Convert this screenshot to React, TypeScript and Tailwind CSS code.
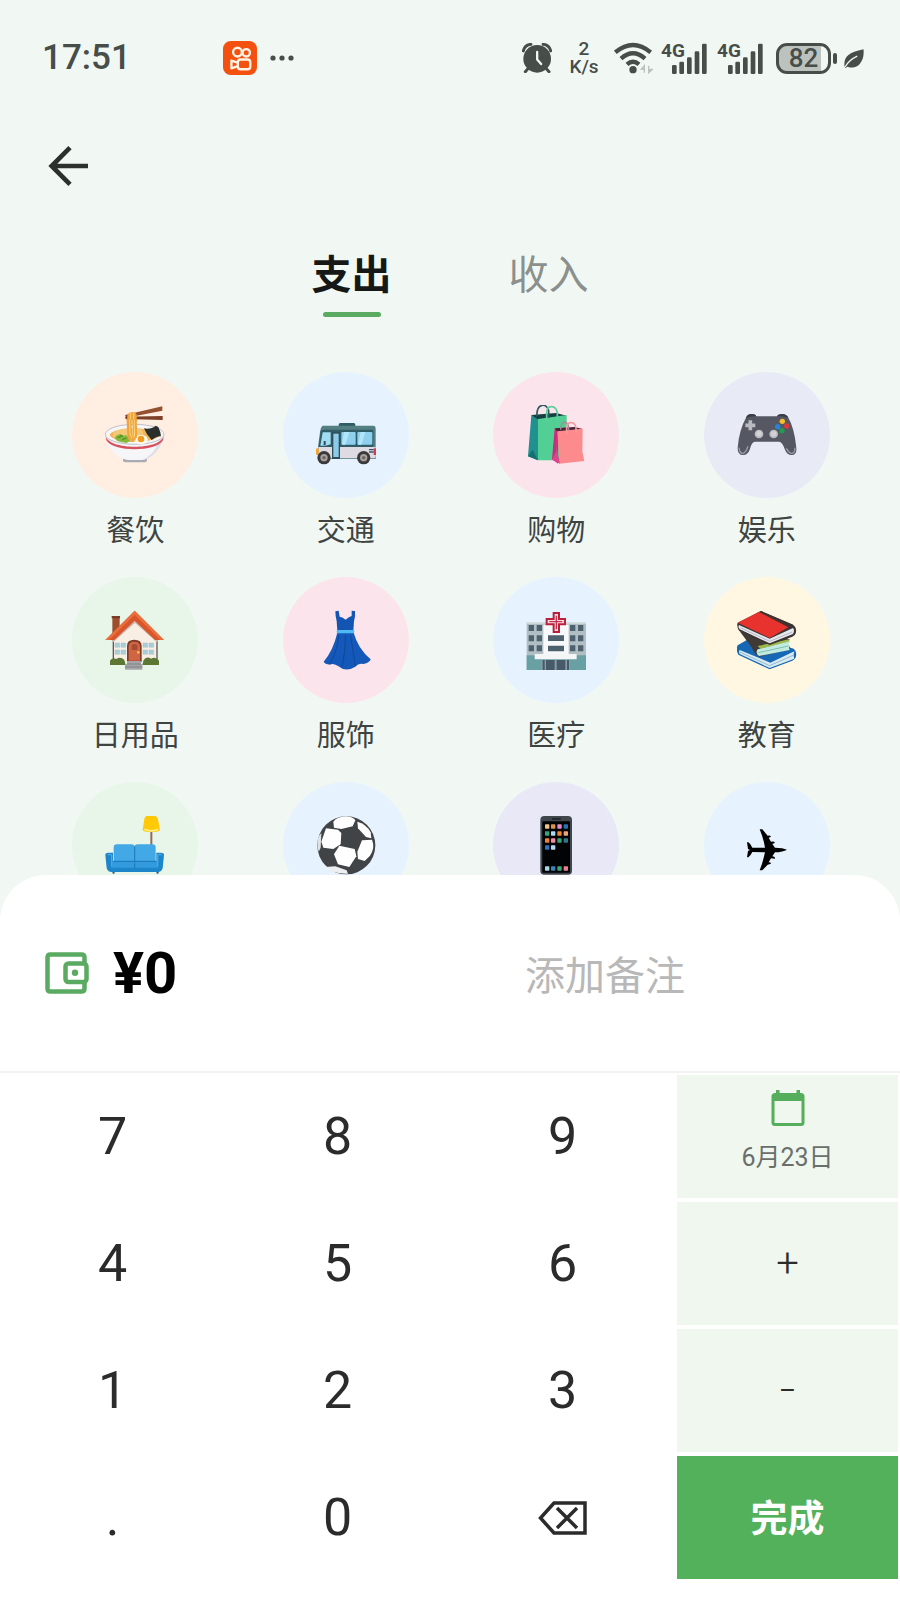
import React, { useState } from "react";

function NoodleIcon() {
  return (
    <svg viewBox="0 0 180 180" className="size-[60px]" aria-hidden="true">
      <rect x="54" y="152" width="72" height="20" rx="7" fill="#a9abb3" />
      <path d="M1 88C6 130 35 162 68 165H112C145 162 173 130 177 88Z" fill="#f6f5f7" />
      <path d="M130 160C155 145 172 120 177 92L160 110C152 135 140 150 112 165Z" fill="#dfdfe6" />
      <ellipse cx="89" cy="88" rx="88" ry="30" fill="#f7f5f6" stroke="#bfc0c8" strokeWidth="3" />
      <path d="M2 94C14 136 164 136 176 94L174 106C154 142 24 142 4 106Z" fill="#d6525e" />
      <path d="M14 90C20 64 158 64 164 90C150 118 28 118 14 90Z" fill="#f0b45a" />
      <path d="M24 84C40 68 80 68 110 72L120 100C90 112 50 108 24 96Z" fill="#f4c877" />
      <path d="M33 92l12-5 10 5 10-1 6 8 4 8-10 7-14-2-14-4-8-8z" fill="#86b93b" />
      <path d="M38 98l10-3M52 104l12-5M46 90l8 4" stroke="#4f8f23" strokeWidth="4" />
      <path d="M117 70C130 74 145 68 152 62L160 66L166 82L168 94C158 92 148 100 140 105L126 88Z" fill="#2b302c" />
      <ellipse cx="108" cy="104" rx="20" ry="14" fill="#fffaf0" />
      <circle cx="108" cy="102" r="10" fill="#f39a1d" />
      <path d="M66 36C74 60 64 74 74 104M76 34C78 60 74 80 82 108M86 34C82 60 92 80 88 106M94 36C88 60 96 76 92 98" stroke="#eea53c" strokeWidth="7" fill="none" />
      <path d="M72 40C78 60 70 80 80 100M90 36C84 60 92 74 88 96" stroke="#ffd37a" strokeWidth="3" fill="none" />
      <path d="M60 30L172 4V17L64 38Z" fill="#93512f" />
      <path d="M60 35L173 33V45L62 42Z" fill="#7b4027" />
      <path d="M68 28C76 18 90 20 94 28L96 44H66Z" fill="#eea53c" />
      <path d="M76 24V44M86 24V44" stroke="#ffd37a" strokeWidth="3" />
    </svg>
  );
}

function BusIcon() {
  return (
    <svg viewBox="0 0 180 180" className="size-[60px]" aria-hidden="true">
      <rect x="68" y="54" width="50" height="16" rx="5" fill="#2f5c66" />
      <path d="M20 62H172Q179 62 179 72V162H6V126L12 82Q14 66 20 62Z" fill="#547f83" />
      <path d="M7 126H179V152Q179 160 172 160H7Z" fill="#dedbe3" />
      <path d="M14 78Q18 74 24 74H172V126H8Z" fill="#2f5c66" />
      <path d="M20 82H44V118Q26 124 13 122Z" fill="#a2dcf4" />
      <rect x="76" y="81" width="43" height="38" rx="3" fill="#8fd0ef" />
      <rect x="124" y="81" width="45" height="38" rx="3" fill="#8fd0ef" />
      <path d="M84 81h16l-12 38H78zM134 81h14l-12 38h-10z" fill="#b3e5fa" />
      <rect x="48" y="82" width="24" height="80" fill="#2f4e58" />
      <rect x="52" y="86" width="16" height="70" fill="#8ccceb" />
      <path d="M26 108v12" stroke="#2f4e58" strokeWidth="6" />
      <rect x="0" y="130" width="8" height="20" rx="3" fill="#f4a62a" />
      <rect x="173" y="130" width="8" height="20" fill="#d8394c" />
      <path d="M159 134h14M159 141h14" stroke="#34596a" strokeWidth="4" />
      <circle cx="24" cy="158" r="20" fill="#3a3a3c" />
      <circle cx="24" cy="158" r="11" fill="#a8a09a" />
      <circle cx="24" cy="158" r="5" fill="#6b6461" />
      <circle cx="143" cy="158" r="20" fill="#3a3a3c" />
      <circle cx="143" cy="158" r="11" fill="#a8a09a" />
      <circle cx="143" cy="158" r="5" fill="#6b6461" />
    </svg>
  );
}

function BagsIcon() {
  return (
    <svg viewBox="0 0 180 180" className="size-[60px]" aria-hidden="true">
      <path d="M16 30L38 36L36 166L6 154Z" fill="#1f918e" />
      <path d="M16 30L90 24L122 32L38 44Z" fill="#173f42" />
      <path d="M36 42L122 30V166L36 166Z" fill="#52cf94" />
      <path d="M6 154L20 134L36 166Z" fill="#13726f" />
      <path d="M33 34C30-4 62-10 68 18V38" stroke="#2d5a5b" strokeWidth="5" fill="none" />
      <path d="M62 50V22C64-2 90 0 94 24V46" stroke="#5ecf9d" strokeWidth="5" fill="none" />
      <path d="M86 70L96 76V176L78 162Z" fill="#c72f7d" />
      <path d="M86 70L145 66L170 72L94 80Z" fill="#4a2033" />
      <path d="M94 79L170 71L169 140L175 168L100 176Z" fill="#fd8a8d" />
      <path d="M94 79L92 130L102 176L78 164L90 140Z" fill="#dc458b" />
      <path d="M104 74C104 46 126 46 128 66V76" stroke="#a8899b" strokeWidth="4" fill="none" />
      <path d="M122 86V68C124 48 146 48 150 68V82" stroke="#f79a9f" strokeWidth="5" fill="none" />
    </svg>
  );
}

function GamepadIcon() {
  return (
    <svg viewBox="0 0 180 180" className="size-[60px]" aria-hidden="true">
      <path d="M28 36Q32 27 44 27Q55 27 58 34H120Q124 27 136 27Q148 27 154 38Q172 68 178 128Q180 150 164 150Q150 150 144 134Q136 110 126 110H54Q44 110 38 134Q32 150 18 150Q1 150 2 128Q6 76 28 36Z" fill="#555862" />
      <path d="M28 36Q32 27 44 27Q55 27 58 34Q40 32 28 40ZM120 34Q124 27 136 27Q148 27 154 38Q138 32 120 34Z" fill="#3a3c46" />
      <path d="M6 128Q8 146 18 145Q26 144 33 124M174 128Q174 146 162 145Q154 142 148 130" stroke="#9a9ca4" strokeWidth="4" fill="none" />
      <path d="M40 46v30M25 61h30" stroke="#b9babf" strokeWidth="11" />
      <circle cx="66" cy="87" r="13" fill="#bcbcc1" />
      <circle cx="110" cy="87" r="13" fill="#bcbcc1" />
      <circle cx="66" cy="86" r="8" fill="#d3d3d6" />
      <circle cx="110" cy="86" r="8" fill="#d3d3d6" />
      <circle cx="136" cy="49" r="8" fill="#f6bd2c" />
      <circle cx="122" cy="65" r="8" fill="#2583d8" />
      <circle cx="149" cy="63" r="8" fill="#d5393c" />
      <circle cx="135" cy="77" r="8" fill="#219b4d" />
    </svg>
  );
}

function HouseIcon() {
  return (
    <svg viewBox="0 0 180 180" className="size-[60px]" aria-hidden="true">
      <rect x="22" y="22" width="22" height="50" fill="#9c4f2d" />
      <rect x="20" y="18" width="25" height="7" fill="#7b3d25" />
      <path d="M25 82L90 22L155 82V156H25Z" fill="#f8eee4" />
      <path d="M25 84V156M156 84V156" stroke="#5f5a58" strokeWidth="4" />
      <path d="M22 94L90 34L158 94" stroke="#c9b8ad" strokeWidth="7" fill="none" />
      <path d="M89 2L177 90H150L89 32L28 90H1Z" fill="#d9552b" />
      <path d="M89 2L177 90H166L89 14L12 90H1Z" fill="#ea6f3d" />
      <path d="M66 150V108Q66 89 88 89Q110 89 110 108V156H66Z" fill="#7f3a28" />
      <path d="M71 152V110Q71 95 88 95Q105 95 105 110V152Z" fill="#d06543" />
      <path d="M80 120V106Q88 98 97 106V120Z" fill="#a94a32" />
      <circle cx="100" cy="127" r="4" fill="#ffc14a" />
      <path d="M30 99h14v13H30zM48 99h14v13H48zM30 120h14v13H30zM48 120h14v13H48zM114 99h14v13h-14zM132 99h14v13h-14zM114 120h14v13h-14zM132 120h14v13h-14z" fill="#a8cfd9" stroke="#8fb8c2" strokeWidth="1" />
      <path d="M15 165V152Q22 140 34 147Q46 138 58 150L62 165ZM112 165L116 150Q126 138 138 146Q152 138 162 152V165Z" fill="#5c7733" />
      <path d="M66 153H108V162H112V179H60V162H66Z" fill="#a5a6a9" />
      <path d="M66 162H108M60 171H112" stroke="#7f8083" strokeWidth="3" />
    </svg>
  );
}

function DressIcon() {
  return (
    <svg viewBox="0 0 180 180" className="size-[60px]" aria-hidden="true">
      <path d="M58 4L68 2L71 20Q78 20 89 29Q99 20 107 18L107 2L117 3Q119 18 114 34L112 62L64 62L62 34Q58 18 58 4Z" fill="#1455b3" />
      <path d="M64 68H113Q126 116 164 148Q162 158 142 162Q128 158 118 170Q90 188 66 168Q50 158 42 164Q26 162 23 155Q52 120 64 68Z" fill="#1459b9" />
      <path d="M68 76Q66 118 42 160M88 76Q88 130 78 170M104 76Q112 130 118 168" stroke="#0e479b" strokeWidth="3" fill="none" />
      <rect x="62" y="60" width="53" height="10" rx="3" fill="#4fb9f2" />
    </svg>
  );
}

function HospitalIcon() {
  return (
    <svg viewBox="0 0 180 180" className="size-[60px]" aria-hidden="true">
      <rect x="2" y="36" width="178" height="144" fill="#b1bfc5" />
      <path d="M2 36h178v5H2z" fill="#d6e0e3" />
      <path d="M2 136h178v44H2z" fill="#69a0a4" />
      <rect x="52" y="44" width="76" height="92" fill="#f7f8f9" />
      <path d="M8 45h16v18H8zM32 45h16v18H32zM8 76h16v18H8zM32 76h16v18H32zM8 106h16v18H8zM32 106h16v18H32zM132 45h16v18h-16zM156 45h16v18h-16zM132 76h16v18h-16zM156 76h16v18h-16zM132 106h16v18h-16zM156 106h16v18h-16z" fill="#4d626e" />
      <path d="M66 76h48v17H66zM66 107h48v17H66z" fill="#4d626e" />
      <rect x="26" y="132" width="126" height="16" rx="2" fill="#f4f5f7" />
      <rect x="46" y="150" width="86" height="30" fill="#899ca8" />
      <path d="M50 150h6v30h-6zM60 150h26v30H60zM92 150h26v30H92zM123 150h6v30h-6z" fill="#465a69" />
      <path d="M80 6H102V24H120V46H102V69H80V46H59V24H80Z" fill="#b9213b" />
      <path d="M86 12H96V30H114V40H96V63H86V40H65V30H86Z" fill="#f6dfe4" />
      <path d="M91 17V58M70 35H109" stroke="#c9304a" strokeWidth="4" />
    </svg>
  );
}

function BooksIcon() {
  return (
    <svg viewBox="0 0 180 180" className="size-[60px]" aria-hidden="true">
      <path d="M2 106L50 78L170 116Q180 124 177 138Q176 148 166 152L98 178L4 134Q-4 118 2 106Z" fill="#1768b4" />
      <path d="M8 120L100 158L172 124Q168 136 172 146L98 174L8 132Q4 126 8 120Z" fill="#d8eaf2" />
      <path d="M8 126L98 167L168 136" stroke="#90b9d0" strokeWidth="3" fill="none" />
      <path d="M8 64L80 60L158 88Q150 96 156 106L160 118L68 140Q54 136 44 112Z" fill="#403a36" />
      <path d="M62 108L156 88L158 95L70 116Z" fill="#9bb944" />
      <path d="M62 118L158 94Q154 108 158 120L66 138Q54 130 62 118Z" fill="#c1eae0" />
      <path d="M64 128L154 108" stroke="#80bfad" strokeWidth="3" />
      <path d="M2 38L72 3L168 44Q179 52 177 66Q176 76 166 80L98 105L6 62Q-2 48 2 38Z" fill="#3c3434" />
      <path d="M72 3L168 44L138 60L58 10Z" fill="#41312f" />
      <path d="M58 10L66 6L154 52L98 84L2 38Z" fill="#e7322e" />
      <path d="M6 45L98 86L168 54Q174 62 168 72L98 100L8 58Q2 52 6 45Z" fill="#e6e8ed" />
      <path d="M10 53L98 94L166 66" stroke="#b5bac3" strokeWidth="3" fill="none" />
    </svg>
  );
}

function SofaIcon() {
  return (
    <svg viewBox="0 0 180 180" className="size-[60px]" aria-hidden="true">
      <path d="M139 46V94" stroke="#946a59" strokeWidth="6" />
      <path d="M124 3H150Q158 5 160 18L165 44Q164 51 139 51Q114 51 113 44L118 12Q120 4 124 3Z" fill="#ffc907" />
      <path d="M118 43Q139 52 160 43" stroke="#fff08a" strokeWidth="5" fill="none" />
      <path d="M22 168h8l-2 8h-5zM154 168h8l-2 8h-5z" fill="#305b7a" />
      <path d="M1 120Q1 113 10 113H24V146H154V113H168Q177 113 177 120L173 160Q170 171 158 171H20Q8 171 5 160Z" fill="#1d86cb" />
      <rect x="26" y="88" width="63" height="58" rx="10" fill="#42a8e6" />
      <rect x="88" y="88" width="64" height="58" rx="10" fill="#42a8e6" />
      <path d="M22 138H88V158H18ZM90 138H156L160 158H90Z" fill="#339bdd" />
      <path d="M89 94V160M24 139H154" stroke="#187ab9" strokeWidth="3" />
      <path d="M8 120Q14 116 20 120L20 154M170 120Q164 116 158 120V154" stroke="#43aae7" strokeWidth="4" fill="none" />
    </svg>
  );
}

function SoccerIcon() {
  return (
    <svg viewBox="0 0 180 180" className="size-[60px]" aria-hidden="true">
      <circle cx="91" cy="91" r="87" fill="#414447" />
      <path d="M52 20Q64 5 90 4Q112 6 118 16L110 34L76 42L54 38Z" fill="#fff" />
      <path d="M124 20Q150 26 164 52L166 70L150 66L126 40Z" fill="#fff" />
      <path d="M30 40L66 44L76 54L74 88L52 102L22 98L16 80Z" fill="#fff" />
      <path d="M70 92L116 102L121 124L100 156L66 148L54 118Z" fill="#fff" />
      <path d="M138 76L168 74Q178 98 162 122L146 138L126 132L124 110Z" fill="#fff" />
      <path d="M28 156L58 154L92 166L96 176Q52 178 28 156Z" fill="#eceeef" />
      <path d="M6 70Q10 58 16 54L14 98L8 110Q2 92 6 70Z" fill="#dfe2e3" />
    </svg>
  );
}

const PHONE_TILES = [
  [57, 28, "#f2c184"], [75, 28, "#d9954a"], [94, 28, "#e58bd0"], [113, 28, "#2671ad"],
  [57, 49, "#3aa57c"], [75, 49, "#acd9f5"], [94, 49, "#ee8632"], [113, 49, "#eaa672"],
  [57, 70, "#f28039"], [75, 70, "#eb8fa4"], [94, 70, "#35a37e"], [113, 70, "#2c7888"],
  [57, 91, "#2e72c0"], [75, 91, "#b6d7ef"],
  [57, 154, "#a9d9e8"], [75, 154, "#3b84b5"], [94, 154, "#3da978"], [113, 154, "#ef7c93"],
] as const;

function PhoneIcon() {
  return (
    <svg viewBox="0 0 180 180" className="size-[60px]" aria-hidden="true">
      <rect x="43" y="3" width="95" height="176" rx="12" fill="#40474c" />
      <rect x="49" y="19" width="83" height="154" rx="3" fill="#020304" />
      <rect x="77" y="9" width="28" height="5" rx="2" fill="#20272b" />
      {PHONE_TILES.map(([x, y, fill]) => (
        <rect key={`${x}-${y}`} x={x} y={y} width="13" height="13" rx="2" fill={fill} />
      ))}
    </svg>
  );
}

function PlaneIcon() {
  return (
    <svg viewBox="0 0 180 180" className="size-[60px]" aria-hidden="true">
      <path d="M30 82H34Q42 87 46 98L84 98Q80 72 68 43H76L92 62Q100 60 101 64V66L95 68L102 80Q112 78 113 82V84L106 87L114 98Q138 98 150 104Q138 111 114 112L106 124Q113 125 114 128V131L102 130L95 142Q102 142 102 146L92 149L76 166H68Q78 140 84 112L46 111Q42 120 34 127H30L33 108L39 105L33 102Z" fill="#000" />
    </svg>
  );
}

const CATEGORIES = [
  { id: "food", name: "餐饮", tint: "bg-[#ffeee1]", Icon: NoodleIcon },
  { id: "transport", name: "交通", tint: "bg-[#e6f2fe]", Icon: BusIcon },
  { id: "shopping", name: "购物", tint: "bg-[#fce4ec]", Icon: BagsIcon },
  { id: "fun", name: "娱乐", tint: "bg-[#e8eaf6]", Icon: GamepadIcon },
  { id: "daily", name: "日用品", tint: "bg-[#e8f5e9]", Icon: HouseIcon },
  { id: "clothes", name: "服饰", tint: "bg-[#fce4ec]", Icon: DressIcon },
  { id: "medical", name: "医疗", tint: "bg-[#e6f2fe]", Icon: HospitalIcon },
  { id: "education", name: "教育", tint: "bg-[#fff7e1]", Icon: BooksIcon },
  { id: "home", name: "", tint: "bg-[#e8f5e9]", Icon: SofaIcon },
  { id: "sport", name: "", tint: "bg-[#e6f2fe]", Icon: SoccerIcon },
  { id: "phone", name: "", tint: "bg-[#e8e8f6]", Icon: PhoneIcon },
  { id: "travel", name: "", tint: "bg-[#e6f2fe]", Icon: PlaneIcon },
];

function Signal() {
  return (
    <div className="relative h-[31px] w-[47px]">
      <span className="absolute top-0 left-0 text-[19px] leading-4 font-bold">4G</span>
      <svg viewBox="0 0 141 93" className="h-[31px] w-[47px]" aria-hidden="true">
        <g fill="currentColor">
          <rect x="33" y="66" width="14" height="27" rx="4" />
          <rect x="55" y="56" width="14" height="37" rx="4" />
          <rect x="78" y="43" width="14" height="50" rx="4" />
          <rect x="101" y="25" width="14" height="68" rx="4" />
          <rect x="123" y="2" width="14" height="91" rx="4" />
        </g>
      </svg>
    </div>
  );
}

function StatusBar() {
  return (
    <div className="flex h-[116px] shrink-0 items-center pr-9 pl-[42px] text-[#474d49]">
      <span className="w-[181px] text-[35px] leading-10 font-medium">17:51</span>
      <svg viewBox="0 0 101 101" className="size-[34px]" aria-hidden="true">
        <rect width="101" height="101" rx="23" fill="#f4500f" />
        <g fill="none" stroke="#fff3e6" strokeWidth="7" strokeLinejoin="round">
          <circle cx="43" cy="33" r="13" />
          <circle cx="69" cy="35" r="11" />
          <rect x="44" y="55" width="37" height="29" rx="8" />
          <path d="M44 64L25 58V81L44 75" />
        </g>
      </svg>
      <svg viewBox="0 0 24 6" className="ml-[13px] h-[6px] w-6" fill="currentColor" aria-hidden="true">
        <circle cx="3" cy="3" r="2.6" />
        <circle cx="12" cy="3" r="2.6" />
        <circle cx="21" cy="3" r="2.6" />
      </svg>
      <div className="ml-auto flex items-center">
        <svg viewBox="0 0 91 91" className="mr-4 size-[30px]" aria-hidden="true">
          <circle cx="46" cy="48" r="42" fill="currentColor" />
          <path d="M4 24Q8 6 27 4M64 4Q83 6 87 24M18 78L10 87M74 78L82 87" stroke="currentColor" strokeWidth="9" strokeLinecap="round" fill="none" />
          <path d="M46 27V50L58 64" stroke="#f1f8f4" strokeWidth="7" strokeLinecap="round" strokeLinejoin="round" fill="none" />
        </svg>
        <div className="mr-[14px] flex w-8 flex-col items-center text-[19px] leading-[18px] font-medium">
          <span>2</span>
          <span>K/s</span>
        </div>
        <svg viewBox="0 0 117 96" className="mr-2 h-[32px] w-[39px]" aria-hidden="true">
          <g fill="none" stroke="currentColor" strokeWidth="13">
            <path d="M4 31Q57 -13 110 31" />
            <path d="M21 50Q57 18 93 50" />
            <path d="M39 67Q57 51 75 67" />
          </g>
          <circle cx="57" cy="83" r="11" fill="currentColor" />
          <path d="M91 92V71L82 82H91M104 71V92L115 82H104" fill="#bcc2bd" stroke="#bcc2bd" strokeWidth="4" />
        </svg>
        <Signal />
        <div className="ml-[9px]">
          <Signal />
        </div>
        <div className="ml-3 flex h-[31px] w-[55px] items-center justify-center rounded-[11px] border-3 border-current bg-linear-to-r from-[#bcc2be] from-85% to-transparent to-85% text-[26px] leading-7 font-medium">
          82
        </div>
        <div className="mr-[7px] ml-[2px] h-[11px] w-[4px] rounded-sm bg-current" />
        <svg viewBox="0 0 60 58" className="h-[19px] w-5" aria-hidden="true">
          <path d="M59 1Q62 28 48 45Q34 62 10 54L4 58L1 53Q-2 30 13 18Q26 8 59 1Z" fill="currentColor" />
          <path d="M3 55Q14 34 40 22" stroke="#f1f8f4" strokeWidth="4" fill="none" />
        </svg>
      </div>
    </div>
  );
}

const KEY = "flex h-[127px] items-center justify-center text-[52px] leading-none text-[#2b2b2b]";
const SIDE = "flex w-full flex-col items-center bg-[#eff7ef] text-[#2b2b2b]";

export default function App() {
  const [tab, setTab] = useState("支出");
  const [amount, setAmount] = useState("0");
  const press = (key: string) => setAmount((a) => (a === "0" && key !== "." ? key : a + key));
  const erase = () => setAmount((a) => (a.length > 1 ? a.slice(0, -1) : "0"));

  const digit = (key: string) => (
    <button key={key} type="button" onClick={() => press(key)} className={KEY}>
      {key}
    </button>
  );

  return (
    <div className="flex h-screen flex-col overflow-hidden bg-[#f1f8f4] font-[Roboto,'Noto_Sans_CJK_SC',sans-serif]">
      <StatusBar />

      <header className="shrink-0">
        <div className="flex h-[100px] items-center pl-[48px]">
          <button type="button" aria-label="返回">
            <svg viewBox="0 0 120 120" className="size-10" fill="none" stroke="#2c302d" strokeWidth="14" aria-hidden="true">
              <path d="M120 60H14M66 5L11 60L66 115" />
            </svg>
          </button>
        </div>
        <nav className="flex justify-center gap-[117px] pt-[30px]">
          {["支出", "收入"].map((name) => (
            <button key={name} type="button" onClick={() => setTab(name)} className="flex flex-col items-center gap-[6px]">
              <span className={tab === name ? "text-[40px] leading-[60px] font-bold text-[#151816]" : "text-[40px] leading-[60px] text-[#8b908c]"}>
                {name}
              </span>
              <span className={tab === name ? "h-[5px] w-[58px] rounded-full bg-[#5aaa61]" : "h-[5px] w-[58px]"} />
            </button>
          ))}
        </nav>
      </header>

      <main className="mt-[55px] min-h-0 flex-1 overflow-hidden">
        <div className="grid grid-cols-4 gap-y-[26px] pr-7 pl-[30px]">
          {CATEGORIES.map(({ id, name, tint, Icon }) => (
            <button key={id} type="button" className="flex flex-col items-center">
              <span className={`flex size-[126px] items-center justify-center rounded-full ${tint}`}>
                <Icon />
              </span>
              {name && <span className="mt-[13px] text-[29px] leading-10 text-[#404441]">{name}</span>}
            </button>
          ))}
        </div>
      </main>

      <section className="shrink-0 rounded-t-[46px] bg-white pb-[19px]">
        <div className="flex h-[198px] items-center border-b-2 border-[#f2f2f2] pl-[45px]">
          <svg viewBox="0 0 44 42" className="h-[42px] w-11" fill="none" stroke="#5aaa61" strokeWidth="4.5" aria-hidden="true">
            <path d="M39.5 12V5.5Q39.5 2.500 36.500 2.500H5.500Q2.500 2.500 2.500 5.500V36.500Q2.500 39.500 5.500 39.500H36.500Q39.500 39.500 39.500 36.500V30" />
            <rect x="20.500" y="11.500" width="21" height="18.500" rx="3" />
            <circle cx="30" cy="20.800" r="3.200" fill="#5aaa61" stroke="none" />
          </svg>
          <output className="ml-6 flex-1 text-[58px] leading-none font-bold text-black">¥{amount}</output>
          <input
            type="text"
            aria-label="添加备注"
            placeholder="添加备注"
            className="h-16 w-[375px] bg-transparent pt-[6px] text-[40px] text-[#2b2b2b] outline-none placeholder:text-[#b8b8b8]"
          />
        </div>

        <div className="grid grid-cols-4">
          {["7", "8", "9"].map(digit)}
          <div className="flex p-[2px]">
            <button type="button" className={`${SIDE} pt-[15px]`}>
              <svg viewBox="0 0 34 36" className="h-9 w-[34px]" aria-hidden="true">
                <path d="M5 0h3.500v3h17V0h3.500v3h1Q33.500 3 33.500 6.500V32.500Q33.500 36 30 36H4Q.5 36 .5 32.500V6.500Q.5 3 4 3H5ZM3.500 11V33H30.500V11Z" fill="#54ae5b" fillRule="evenodd" />
              </svg>
              <span className="mt-4 text-[25px] leading-8 text-[#6a6f6b]">6月23日</span>
            </button>
          </div>
          {["4", "5", "6"].map(digit)}
          <div className="flex p-[2px]">
            <button type="button" onClick={() => press("+")} className={`${SIDE} justify-center text-[40px] font-light`}>+</button>
          </div>
          {["1", "2", "3"].map(digit)}
          <div className="flex p-[2px]">
            <button type="button" onClick={() => press("-")} className={`${SIDE} justify-center text-[26px]`}>–</button>
          </div>
          {[".", "0"].map(digit)}
          <button type="button" aria-label="删除" onClick={erase} className={KEY}>
            <svg viewBox="0 0 49 34" className="h-[34px] w-[49px]" fill="none" stroke="currentColor" strokeWidth="3.500" aria-hidden="true">
              <path d="M16 2H47V32H16L2.500 17ZM19 7L39 27M39 7L19 27" />
            </svg>
          </button>
          <div className="flex p-[2px]">
            <button type="button" className="w-full bg-[#54b15b] pt-1 text-[37px] leading-none font-bold text-white">完成</button>
          </div>
        </div>
      </section>
    </div>
  );
}
